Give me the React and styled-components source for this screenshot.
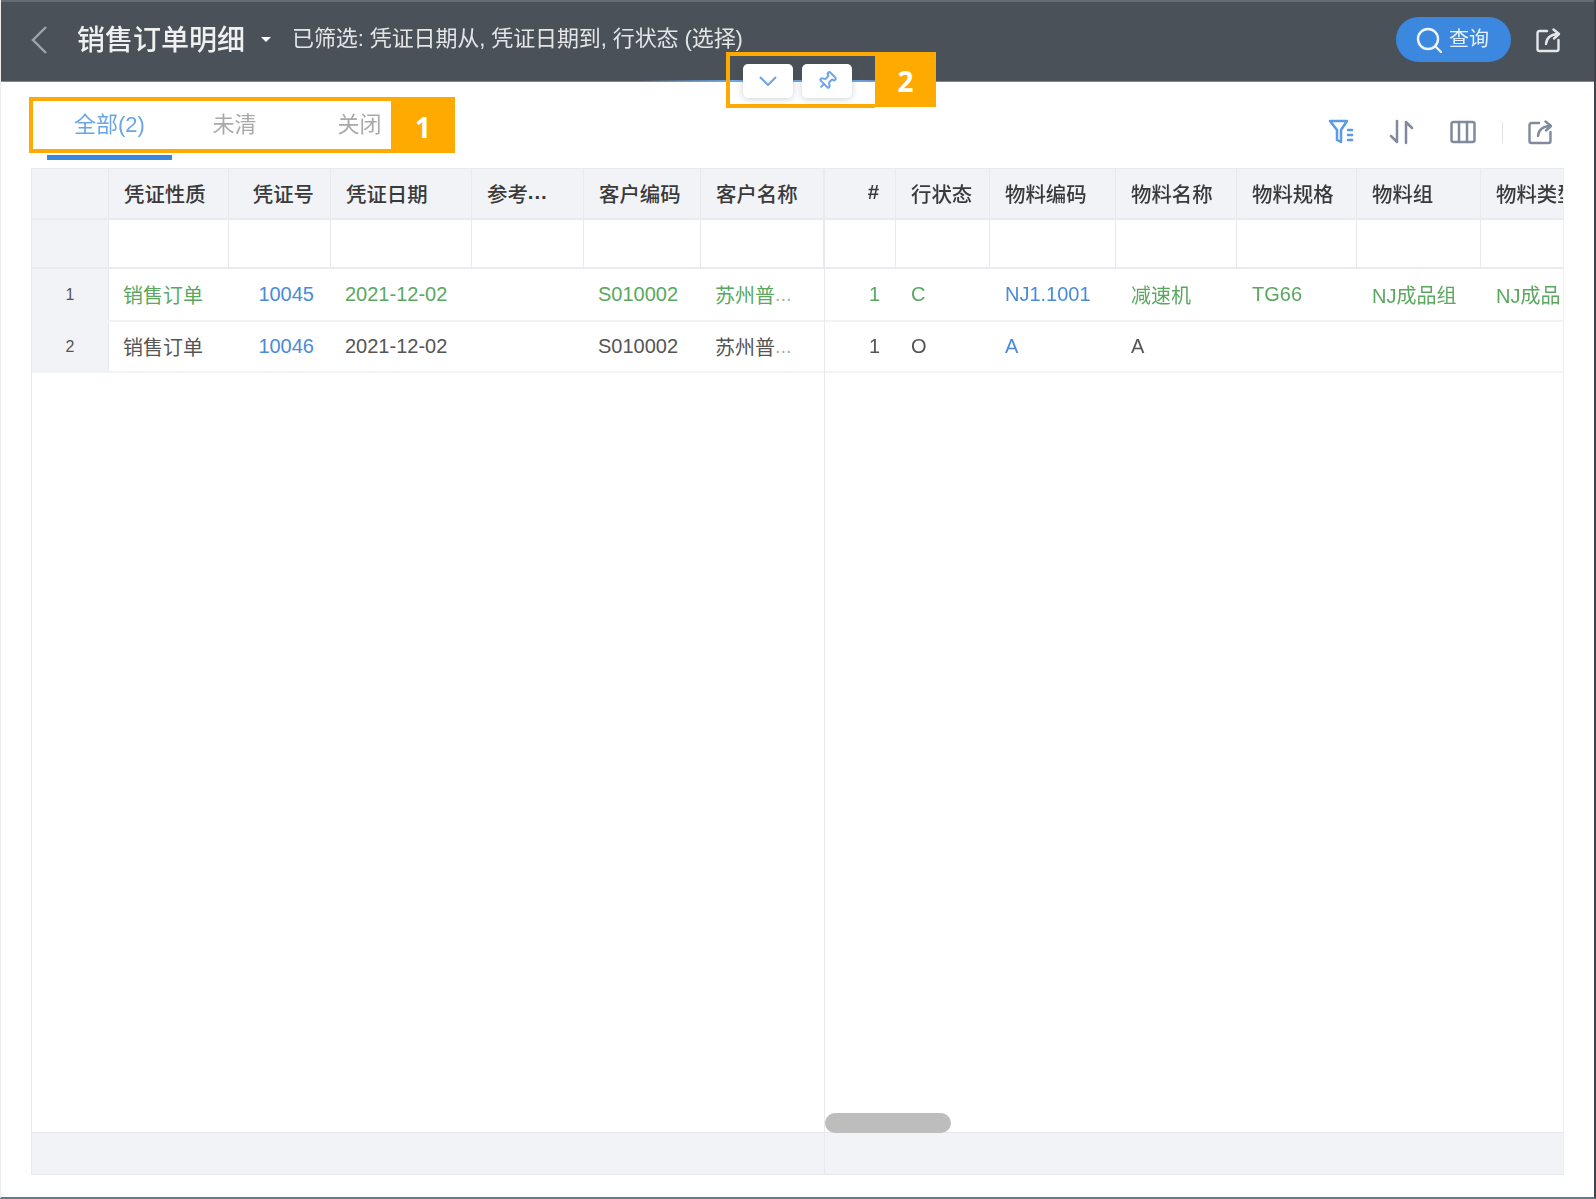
import React from "react";
import styled, { createGlobalStyle } from "styled-components";
import { Pin } from "lucide-react";

const GlobalStyle = createGlobalStyle`
  html, body {
    margin: 0;
    padding: 0;
    background: #fff;
  }
  body {
    font-family: "Liberation Sans", "Noto Sans CJK SC", sans-serif;
  }
  * {
    box-sizing: border-box;
  }
`;

const Page = styled.div`
  position: relative;
  width: 1596px;
  height: 1199px;
  overflow: hidden;
  display: flex;
  flex-direction: column;
  background: #fff;
  border-left: 1px solid #ececec;
  border-right: 2px solid #3f454c;
  border-bottom: 2px solid #67798a;
`;

const TopBar = styled.header`
  position: relative;
  flex: 0 0 82px;
  display: flex;
  align-items: center;
  padding: 0 33px 4px 29px;
  background: #4b5158;
  border-top: 2px solid #666b70;
  border-bottom: 1px solid #83878c;
  color: #f1f2f3;
  filter: blur(0.5px);

  &::after {
    content: '';
    position: absolute;
    left: 640px;
    bottom: -1px;
    width: 300px;
    height: 2px;
    background: linear-gradient(90deg, rgba(90, 150, 225, 0), #6ea6e6 30%, #6ea6e6 70%, rgba(90, 150, 225, 0));
  }
`;

const BackIcon = styled.svg`
  width: 19px;
  height: 30px;
  margin-right: 28px;
  fill: none;
  stroke: #a0a4a9;
  stroke-width: 2.4;
`;

const Title = styled.h1`
  margin: 3px 16px 0 0;
  font-size: 28px;
  line-height: 36px;
  font-weight: 500;
  color: #eff0f1;
`;

const Caret = styled.span`
  width: 0;
  height: 0;
  margin-right: 21px;
  border-left: 5px solid transparent;
  border-right: 5px solid transparent;
  border-top: 5px solid #fff;
`;

const Subtitle = styled.span`
  flex: 1;
  margin-bottom: 7px;
  font-size: 22px;
  letter-spacing: -0.1px;
  color: #e3e5e7;
`;

const QueryButton = styled.button`
  display: flex;
  align-items: center;
  gap: 7px;
  width: 115px;
  height: 45px;
  margin-right: 24px;
  padding: 0 0 0 20px;
  border: none;
  border-radius: 23px;
  background: #3c88de;
  color: #e8f1fb;
  font-family: inherit;
  font-size: 20px;
`;

const QueryLabel = styled.span`
  margin-bottom: 4px;
`;

const SearchIcon = styled.svg`
  width: 26px;
  height: 26px;
  fill: none;
  stroke: #eef4fb;
  stroke-width: 2.4;
  stroke-linecap: round;
`;

const ShareIcon = styled.svg`
  width: 26px;
  height: 26px;
  fill: none;
  stroke: ${props => props.$color};
  stroke-width: 2.4;
  stroke-linecap: round;
  stroke-linejoin: round;
`;

const TabRow = styled.div`
  flex: 0 0 86px;
  display: flex;
  justify-content: space-between;
  align-items: flex-start;
  padding: 0 41px 0 46px;
  filter: blur(0.5px);
`;

const Tabs = styled.nav`
  display: flex;
`;

const Tab = styled.div`
  width: 125px;
  padding: 29px 0 16px;
  font-size: 22px;
  line-height: 28px;
  text-align: center;
  color: ${props => (props.$active ? "#6aa5e8" : "#a9a9a9")};
  border-bottom: 5px solid ${props => (props.$active ? "#3b88dd" : "transparent")};
`;

const Tools = styled.div`
  display: flex;
  align-items: center;
  padding-top: 37px;
`;

const ToolIcon = styled.svg`
  width: 26px;
  height: 26px;
  margin-right: ${props => props.$gap || 35}px;
  fill: none;
  stroke: ${props => props.$color || "#7f8a9c"};
  stroke-width: 2.5;
  stroke-linecap: round;
  stroke-linejoin: round;
`;

const ToolDivider = styled.span`
  width: 1px;
  height: 21px;
  margin: 0 24px 0 0;
  background: #dfe1e5;
`;

const Table = styled.section`
  flex: 0 0 1007px;
  display: flex;
  width: 1533px;
  margin-left: 30px;
  border: 1px solid #e7e9ee;
  border-right-color: #eceef2;
  filter: blur(0.5px);
`;

const Pane = styled.div`
  position: relative;
  display: flex;
  flex-direction: column;
  flex: ${props => (props.$fill ? "1" : "0 0 793px")};
  min-width: 0;
  overflow: hidden;
  border-right: ${props => (props.$fill ? "none" : "1px solid #e7e9ee")};
`;

const Row = styled.div`
  flex: 0 0 ${props => props.$height}px;
  display: grid;
  grid-template-columns: ${props => props.$columns};
  width: max-content;
  min-width: 100%;
  background: ${props => (props.$head ? "#f2f3f7" : "#fff")};
  border-bottom: 2px solid ${props => (props.$head || props.$filter ? "#e9ebf0" : "#f2f3f6")};
`;

const Cell = styled.div`
  display: flex;
  align-items: center;
  justify-content: ${props => (props.$align === "right" ? "flex-end" : props.$align === "center" ? "center" : "flex-start")};
  padding: ${props => (props.$head ? "0 16px 2px 15px" : props.$tight ? "0 17px 0 14px" : "0 16px 0 15px")};
  font-size: ${props => (props.$head ? 20.4 : 20)}px;
  font-weight: ${props => (props.$strong ? 700 : props.$head ? 500 : 400)};
  color: ${props => props.$color || "#555"};
  white-space: nowrap;
  overflow: hidden;
  border-right: ${props => (props.$lined ? "1px solid #e7e9ee" : "none")};
`;

const IndexCell = styled(Cell)`
  padding: 0;
  font-size: 16px;
  background: #f2f3f7;
  border-right: 1px solid #e7e9ee;
`;

const Dots = styled.span`
  color: ${props => (props.$head ? "inherit" : "#a9b0a9")};
  font-weight: ${props => (props.$head ? 700 : 400)};
  letter-spacing: ${props => (props.$head ? "1px" : "0")};
`;

const Spacer = styled.div`
  flex: 1;
`;

const Footer = styled.div`
  flex: 0 0 42px;
  background: #f2f3f7;
  border-top: 1px solid #e7e9ee;
`;

const ScrollThumb = styled.div`
  position: absolute;
  left: 0;
  bottom: 41px;
  width: 126px;
  height: 20px;
  border-radius: 10px;
  background: #bdbdbd;
`;

const Annotation = styled.div`
  position: absolute;
  left: ${props => props.$left}px;
  top: ${props => props.$top}px;
  display: flex;
  align-items: flex-start;
`;

const Frame = styled.div`
  display: flex;
  gap: 9px;
  width: ${props => props.$width}px;
  height: 56px;
  padding: 8px 0 0 13px;
  border: 4px solid #ffaa00;
  border-right: none;
`;

const Badge = styled.div`
  display: flex;
  align-items: center;
  justify-content: center;
  width: ${props => props.$width}px;
  height: ${props => props.$height}px;
  padding-top: 3px;
  background: #ffaa00;
  color: #fff;
  font-family: "Open Sans", "Liberation Sans", sans-serif;
  font-size: 28px;
  font-weight: 700;
`;

const FloatButton = styled.button`
  display: flex;
  align-items: center;
  justify-content: center;
  width: 50px;
  height: 34px;
  padding: 0;
  border: none;
  border-radius: 5px;
  background: #fff;
  box-shadow: 0 1px 6px rgba(60, 70, 85, 0.25);
  color: #6ea6e6;
  filter: blur(0.4px);
`;

const BottomMark = styled.span`
  position: absolute;
  left: 592px;
  bottom: -2px;
  width: 38px;
  height: 2px;
  background: #363c44;
`;

const GREEN = "#5aa85f";
const BLUE = "#4a8bd8";
const GREY = "#555";

const leftColumns = [
  { key: "type", label: "凭证性质", width: 120 },
  { key: "no", label: "凭证号", width: 102, align: "right", link: true },
  { key: "date", label: "凭证日期", width: 141 },
  { key: "ref", label: "参考", width: 112, cut: true },
  { key: "code", label: "客户编码", width: 117 },
  { key: "name", label: "客户名称", width: 123, cut: true },
];

const rightColumns = [
  { key: "line", label: "#", width: 71, align: "right", strong: true },
  { key: "status", label: "行状态", width: 94 },
  { key: "item", label: "物料编码", width: 126, link: true },
  { key: "itemName", label: "物料名称", width: 121 },
  { key: "spec", label: "物料规格", width: 120 },
  { key: "group", label: "物料组", width: 124 },
  { key: "kind", label: "物料类型", width: 120 },
];

const rows = [
  {
    id: 1,
    color: GREEN,
    height: 53,
    type: "销售订单",
    no: "10045",
    date: "2021-12-02",
    code: "S010002",
    name: "苏州普",
    line: "1",
    status: "C",
    item: "NJ1.1001",
    itemName: "减速机",
    spec: "TG66",
    group: "NJ成品组",
    kind: "NJ成品",
  },
  {
    id: 2,
    color: GREY,
    height: 51,
    type: "销售订单",
    no: "10046",
    date: "2021-12-02",
    code: "S010002",
    name: "苏州普",
    line: "1",
    status: "O",
    item: "A",
    itemName: "A",
  },
];

const template = (columns, indexed) =>
  (indexed ? "77px " : "") + columns.map(c => `${c.width}px`).join(" ");

const ExportGlyph = ({ color }) => (
  <ShareIcon viewBox="0 0 26 26" $color={color}>
    <path d="M12 4H4.5A2 2 0 0 0 2.5 6v16a2 2 0 0 0 2 2h17a2 2 0 0 0 2-2v-9" />
    <path d="M11 17c.5-6 4-9.5 12-10" />
    <path d="M18.5 2.5L24 7l-5 4.5" />
  </ShareIcon>
);

const GridPane = ({ columns, indexed, fill, children }) => {
  const tpl = template(columns, indexed);
  return (
    <Pane $fill={fill}>
      <Row $head $height={51} $columns={tpl}>
        {indexed && <IndexCell $head />}
        {columns.map(c => (
          <Cell key={c.key} $head $lined $strong={c.strong} $align={c.align} $color="#3a3a3a">
            {c.label}
            {c.cut && c.key === "ref" && <Dots $head>...</Dots>}
          </Cell>
        ))}
      </Row>
      <Row $filter $height={49} $columns={tpl}>
        {indexed && <IndexCell />}
        {columns.map(c => (
          <Cell key={c.key} $lined />
        ))}
      </Row>
      {rows.map(r => (
        <Row key={r.id} $height={r.height} $columns={tpl}>
          {indexed && <IndexCell $align="center">{r.id}</IndexCell>}
          {columns.map(c => (
            <Cell key={c.key} $tight={indexed} $align={c.align} $color={c.link ? BLUE : r.color}>
              {r[c.key]}
              {c.cut && r[c.key] && <Dots>...</Dots>}
            </Cell>
          ))}
        </Row>
      ))}
      <Spacer />
      <Footer />
      {children}
    </Pane>
  );
};

export default function App() {
  return (
    <>
      <GlobalStyle />
      <Page>
        <TopBar>
          <BackIcon viewBox="0 0 19 30">
            <path d="M16 2L3 15l13 13" />
          </BackIcon>
          <Title>销售订单明细</Title>
          <Caret />
          <Subtitle>已筛选: 凭证日期从, 凭证日期到, 行状态 (选择)</Subtitle>
          <QueryButton>
            <SearchIcon viewBox="0 0 26 26">
              <circle cx="12" cy="12" r="10" />
              <path d="M19.5 19.5L25 25" />
            </SearchIcon>
            <QueryLabel>查询</QueryLabel>
          </QueryButton>
          <ExportGlyph color="#e5e7ea" />
        </TopBar>

        <TabRow>
          <Tabs>
            <Tab $active>全部(2)</Tab>
            <Tab>未清</Tab>
            <Tab>关闭</Tab>
          </Tabs>
          <Tools>
            <ToolIcon viewBox="0 0 26 26" $color="#5a9be6">
              <path d="M2 2h17l-6 9v12l-4-2V11z" />
              <path d="M20 11h4M20 16h4M20 21h4" />
            </ToolIcon>
            <ToolIcon viewBox="0 0 26 26">
              <path d="M8 2v21L2 17" />
              <path d="M17 24V3l6 6" />
            </ToolIcon>
            <ToolIcon viewBox="0 0 26 26" $gap={26}>
              <rect x="1.5" y="3" width="23" height="20" rx="2" />
              <path d="M9 3v20M17 3v20" />
            </ToolIcon>
            <ToolDivider />
            <ExportGlyph color="#7f8a9c" />
          </Tools>
        </TabRow>

        <Table>
          <GridPane columns={leftColumns} indexed />
          <GridPane columns={rightColumns} fill>
            <ScrollThumb />
          </GridPane>
        </Table>

        <Annotation $left={28} $top={97}>
          <Frame $width={362} />
          <Badge $width={64} $height={56}>1</Badge>
        </Annotation>

        <Annotation $left={725} $top={52}>
          <Frame $width={149}>
            <FloatButton aria-label="collapse">
              <svg width="20" height="12" viewBox="0 0 20 12" fill="none" stroke="currentColor" strokeWidth="2.2">
                <path d="M2 2l8 8 8-8" />
              </svg>
            </FloatButton>
            <FloatButton aria-label="pin">
              <Pin size={20} strokeWidth={2.4} style={{ transform: "rotate(45deg)" }} />
            </FloatButton>
          </Frame>
          <Badge $width={61} $height={55}>2</Badge>
        </Annotation>

        <BottomMark />
      </Page>
    </>
  );
}
